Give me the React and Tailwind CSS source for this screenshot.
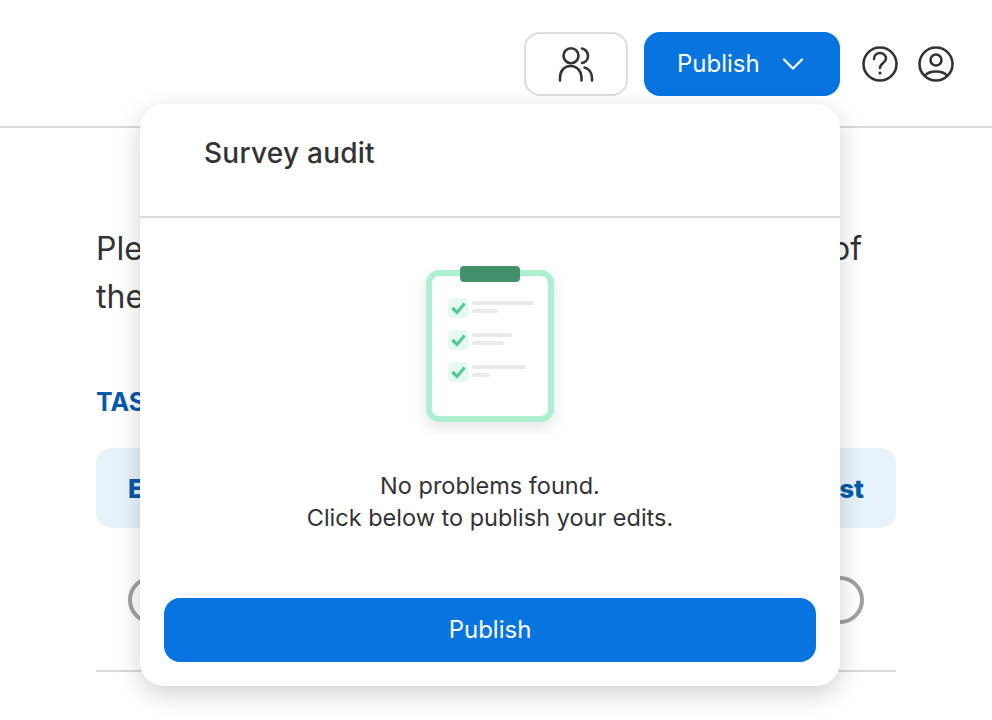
const font = "font-['Inter','Liberation_Sans',sans-serif]"

function PeopleIcon() {
  return (
    <svg width="36" height="36" viewBox="0 0 36 36" fill="none" stroke="#333" strokeWidth="2.600" strokeLinecap="round">
      <circle cx="13" cy="9.700" r="7.500" />
      <path d="M24 2.500c3 .5 6 3.500 6 7.500s-3 6.500-6 7" />
      <path d="M2 34.500v-2C2 25 6 20 12.500 20s11 5 11 12.500v2" />
      <path d="M26.500 21.500c4 1 7.500 5 7.500 11v2" />
    </svg>
  )
}

function HelpIcon() {
  return (
    <svg width="36" height="36" viewBox="0 0 36 36" fill="none" stroke="#333" strokeWidth="2.600" strokeLinecap="round">
      <circle cx="18" cy="18" r="16.500" />
      <path d="M12 13c0-3.800 2.700-6 6-6s6 2.500 6 5.500c0 4.500-6 4.500-6 9.500" />
      <circle cx="18" cy="27" r="1.600" fill="#333" stroke="none" />
    </svg>
  )
}

function UserIcon() {
  return (
    <svg width="36" height="36" viewBox="0 0 36 36" fill="none" stroke="#333" strokeWidth="2.600" strokeLinecap="round">
      <circle cx="18" cy="18" r="16.500" />
      <circle cx="18" cy="14" r="5.500" />
      <path d="M7 29.500C9.500 26.500 13.500 25.500 18 25.500s8.500 1 11 4" />
    </svg>
  )
}

function Clipboard() {
  const rows = [
    { y: 32, a: 62, b: 26 },
    { y: 64, a: 40, b: 32 },
    { y: 96, a: 54, b: 18 },
  ]
  return (
    <svg width="160" height="180" viewBox="0 0 160 180">
      <defs>
        <filter id="soft" x="-30%" y="-30%" width="160%" height="160%">
          <feDropShadow dx="0" dy="6" stdDeviation="7" floodColor="#000" floodOpacity="0.1" />
        </filter>
      </defs>
      <rect x="19" y="18" width="122" height="146" rx="10" fill="#fff" stroke="#adf0d0" strokeWidth="6" filter="url(#soft)" />
      <rect x="50" y="11" width="60" height="16" rx="4" fill="#40916c" />
      {rows.map((r) => (
        <g key={r.y}>
          <rect x="38" y={r.y + 11} width="20" height="20" rx="4" fill="#e6f9f0" />
          <path d={`M42.500 ${r.y + 21}l4.500 4.500 7.500-9`} fill="none" stroke="#52c996" strokeWidth="3.200" />
          <rect x="62" y={r.y + 14} height="4" rx="2" fill="#e9eaec" style={{ width: r.a }} />
          <rect x="62" y={r.y + 22} height="4" rx="2" fill="#e9eaec" style={{ width: r.b }} />
        </g>
      ))}
    </svg>
  )
}

export default function App() {
  return (
    <div className={`relative h-[720px] w-[992px] overflow-hidden bg-white text-[#333] ${font}`}>
      <header className="flex h-[128px] items-start justify-end gap-4 border-b-2 border-[#d9d9d9] pt-8 pr-[38px]">
        <button className="flex h-16 w-[104px] items-center justify-center rounded-2xl border-2 border-[#dcdcdc]">
          <PeopleIcon />
        </button>
        <button className="flex h-16 w-[196px] items-center gap-[22px] rounded-2xl bg-[#0774e0] pl-[33px] text-2xl text-white">
          Publish
          <svg width="22" height="12" viewBox="0 0 22 12" fill="none" stroke="#fff" strokeWidth="2.200" strokeLinecap="round" strokeLinejoin="round">
            <path d="M2 1.500l9 9 9-9" />
          </svg>
        </button>
        <div className="ml-[6px] flex h-16 items-center gap-5">
          <HelpIcon />
          <UserIcon />
        </div>
      </header>

      <main className="px-24 pt-[97px]">
        <div className="flex justify-between text-[32px] leading-12">
          <span>Please</span>
          <span className="pr-[34px]">of</span>
        </div>
        <p className="text-[32px] leading-12">the</p>
        <h2 className="mt-[65px] text-[25px] leading-8 font-bold text-[#0559ad]">TASK</h2>
        <div className="mt-[30px] flex h-20 items-center justify-between rounded-2xl bg-[#e8f2fb] px-8 text-[26px] font-extrabold text-[#0559ad]">
          <span>E</span>
          <span>st</span>
        </div>
        <div className="mt-[48px] flex justify-between border-b-2 border-[#d9d9d9] px-8 pb-[46px]">
          <div className="h-12 w-12 rounded-full border-4 border-[#a0a0a0]" />
          <div className="h-12 w-12 rounded-full border-4 border-[#a0a0a0]" />
        </div>
      </main>

      <div className="absolute top-[104px] left-[140px] flex h-[582px] w-[700px] flex-col rounded-3xl bg-white shadow-[0_8px_24px_rgba(0,0,0,0.18)]">
        <div className="h-[114px] border-b-2 border-[#d9d9d9] pt-[29px] pl-16 text-[28px] leading-10 font-medium tracking-[0.25px]">
          Survey audit
        </div>
        <div className="flex justify-center pt-[37px]">
          <Clipboard />
        </div>
        <p className="mt-[35px] text-center text-[23.5px] leading-8">
          No problems found.
          <br />
          Click below to publish your edits.
        </p>
        <button className="mx-6 mt-auto mb-6 h-16 rounded-2xl bg-[#0774e0] text-2xl text-white">
          Publish
        </button>
      </div>
    </div>
  )
}
